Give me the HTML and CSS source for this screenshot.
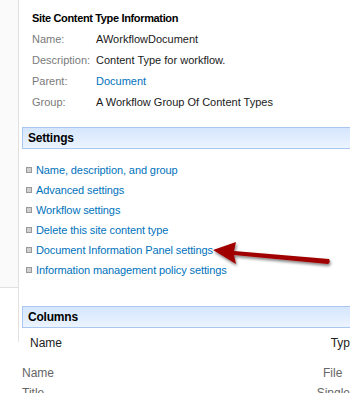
FILE: index.html
```html
<!DOCTYPE html>
<html>
<head>
<meta charset="utf-8">
<link rel="stylesheet" href="styles.css">
</head>
<body>
<div class="page">
  <div class="leftnav"><div class="navtop"></div></div>
  <div class="main">
    <div class="info">
      <div class="title">Site Content Type Information</div>
      <div class="row"><span class="lbl">Name:</span><span class="val">AWorkflowDocument</span></div>
      <div class="row"><span class="lbl">Description:</span><span class="val">Content Type for workflow.</span></div>
      <div class="row"><span class="lbl">Parent:</span><a class="val link">Document</a></div>
      <div class="row"><span class="lbl">Group:</span><span class="val">A Workflow Group Of Content Types</span></div>
    </div>
    <div class="sectionbar">Settings</div>
    <ul class="links">
      <li><a>Name, description, and group</a></li>
      <li><a>Advanced settings</a></li>
      <li><a>Workflow settings</a></li>
      <li><a>Delete this site content type</a></li>
      <li><a>Document Information Panel settings</a></li>
      <li><a>Information management policy settings</a></li>
    </ul>
    <div class="sectionbar cols">Columns</div>
    <div class="colhead"><span class="c1">Name</span><span class="c2">Typ</span></div>
    <div class="colrow first"><span class="c1">Name</span><span class="c2">File</span></div>
    <div class="colrow"><span class="c1">Title</span><span class="c2">Single</span></div>
  </div>
</div>
<svg class="arrow" width="140" height="50" viewBox="0 0 140 50">
  <defs>
    <filter id="sh" x="-20%" y="-50%" width="140%" height="200%">
      <feGaussianBlur in="SourceAlpha" stdDeviation="1.5"/>
      <feOffset dx="1" dy="2" result="b"/>
      <feComponentTransfer><feFuncA type="linear" slope="0.5"/></feComponentTransfer>
      <feMerge><feMergeNode/><feMergeNode in="SourceGraphic"/></feMerge>
    </filter>
  </defs>
  <g filter="url(#sh)">
    <path d="M14 25 L37 17 L35 26 L130 34 Q132 37 129 39 L35 30 L37 39 Z" fill="#a10000"/>
  </g>
</svg>
</body>
</html>
```
FILE: styles.css
```css
html, body { margin: 0; padding: 0; background: #fff; }
body {
  font-family: "Liberation Sans", Arial, sans-serif;
  font-size: 11px;
  color: #333;
  width: 350px;
  height: 393px;
  overflow: hidden;
  position: relative;
}
.page { display: flex; align-items: flex-start; }
.leftnav {
  width: 18px;
  height: 342px;
  border-right: 1px solid #e1e1e1;
  flex: none;
}
.navtop {
  height: 287px;
  background: #fafafa;
  border-bottom: 1px solid #e1e1e1;
}
.main { flex: 1; min-width: 0; white-space: nowrap; }
.info { padding: 8px 0 0 13px; }
.title { font-weight: bold; color: #000; line-height: 20px; margin-bottom: 1px; letter-spacing: -0.35px; }
.row { display: flex; line-height: 21px; }
.lbl { width: 64px; color: #7a7a7a; flex: none; }
.val { color: #1a1a1a; }
.link, .links a { color: #0072bc; }
.sectionbar {
  margin: 14px 0 0 3px;
  height: 20px;
  line-height: 20px;
  border-top: 1px solid #a8c8f2;
  border-bottom: 1px solid #a8c8f2;
  border-left: 1px solid #a8c8f2;
  background: linear-gradient(#d5e6fd, #ecf4ff);
  padding-left: 5px;
  font-weight: bold;
  color: #000;
  font-size: 12px;
  letter-spacing: -0.2px;
}
.links { list-style: none; margin: 11px 0 0 0; padding: 0 0 0 7px; }
.links li { display: flex; align-items: center; line-height: 20px; letter-spacing: -0.1px; }
.links li::before {
  content: "";
  width: 4px; height: 4px;
  border: 1px solid #9a9a9a;
  background: #cfcfcf;
  margin-right: 4px;
  flex: none;
}
.sectionbar.cols { margin-top: 26px; }
.colhead, .colrow { display: flex; }
.colhead { line-height: 20px; margin-top: 5px; padding-left: 11px; font-size: 12px; color: #222; }
.colhead .c1 { width: 301px; }
.colrow { line-height: 20px; color: #666; font-size: 12px; margin-left: 3px; }
.colrow.first { margin-top: 10px; }
.colrow .c1 { width: 301px; }
.arrow { position: absolute; left: 199px; top: 225px; }
```
